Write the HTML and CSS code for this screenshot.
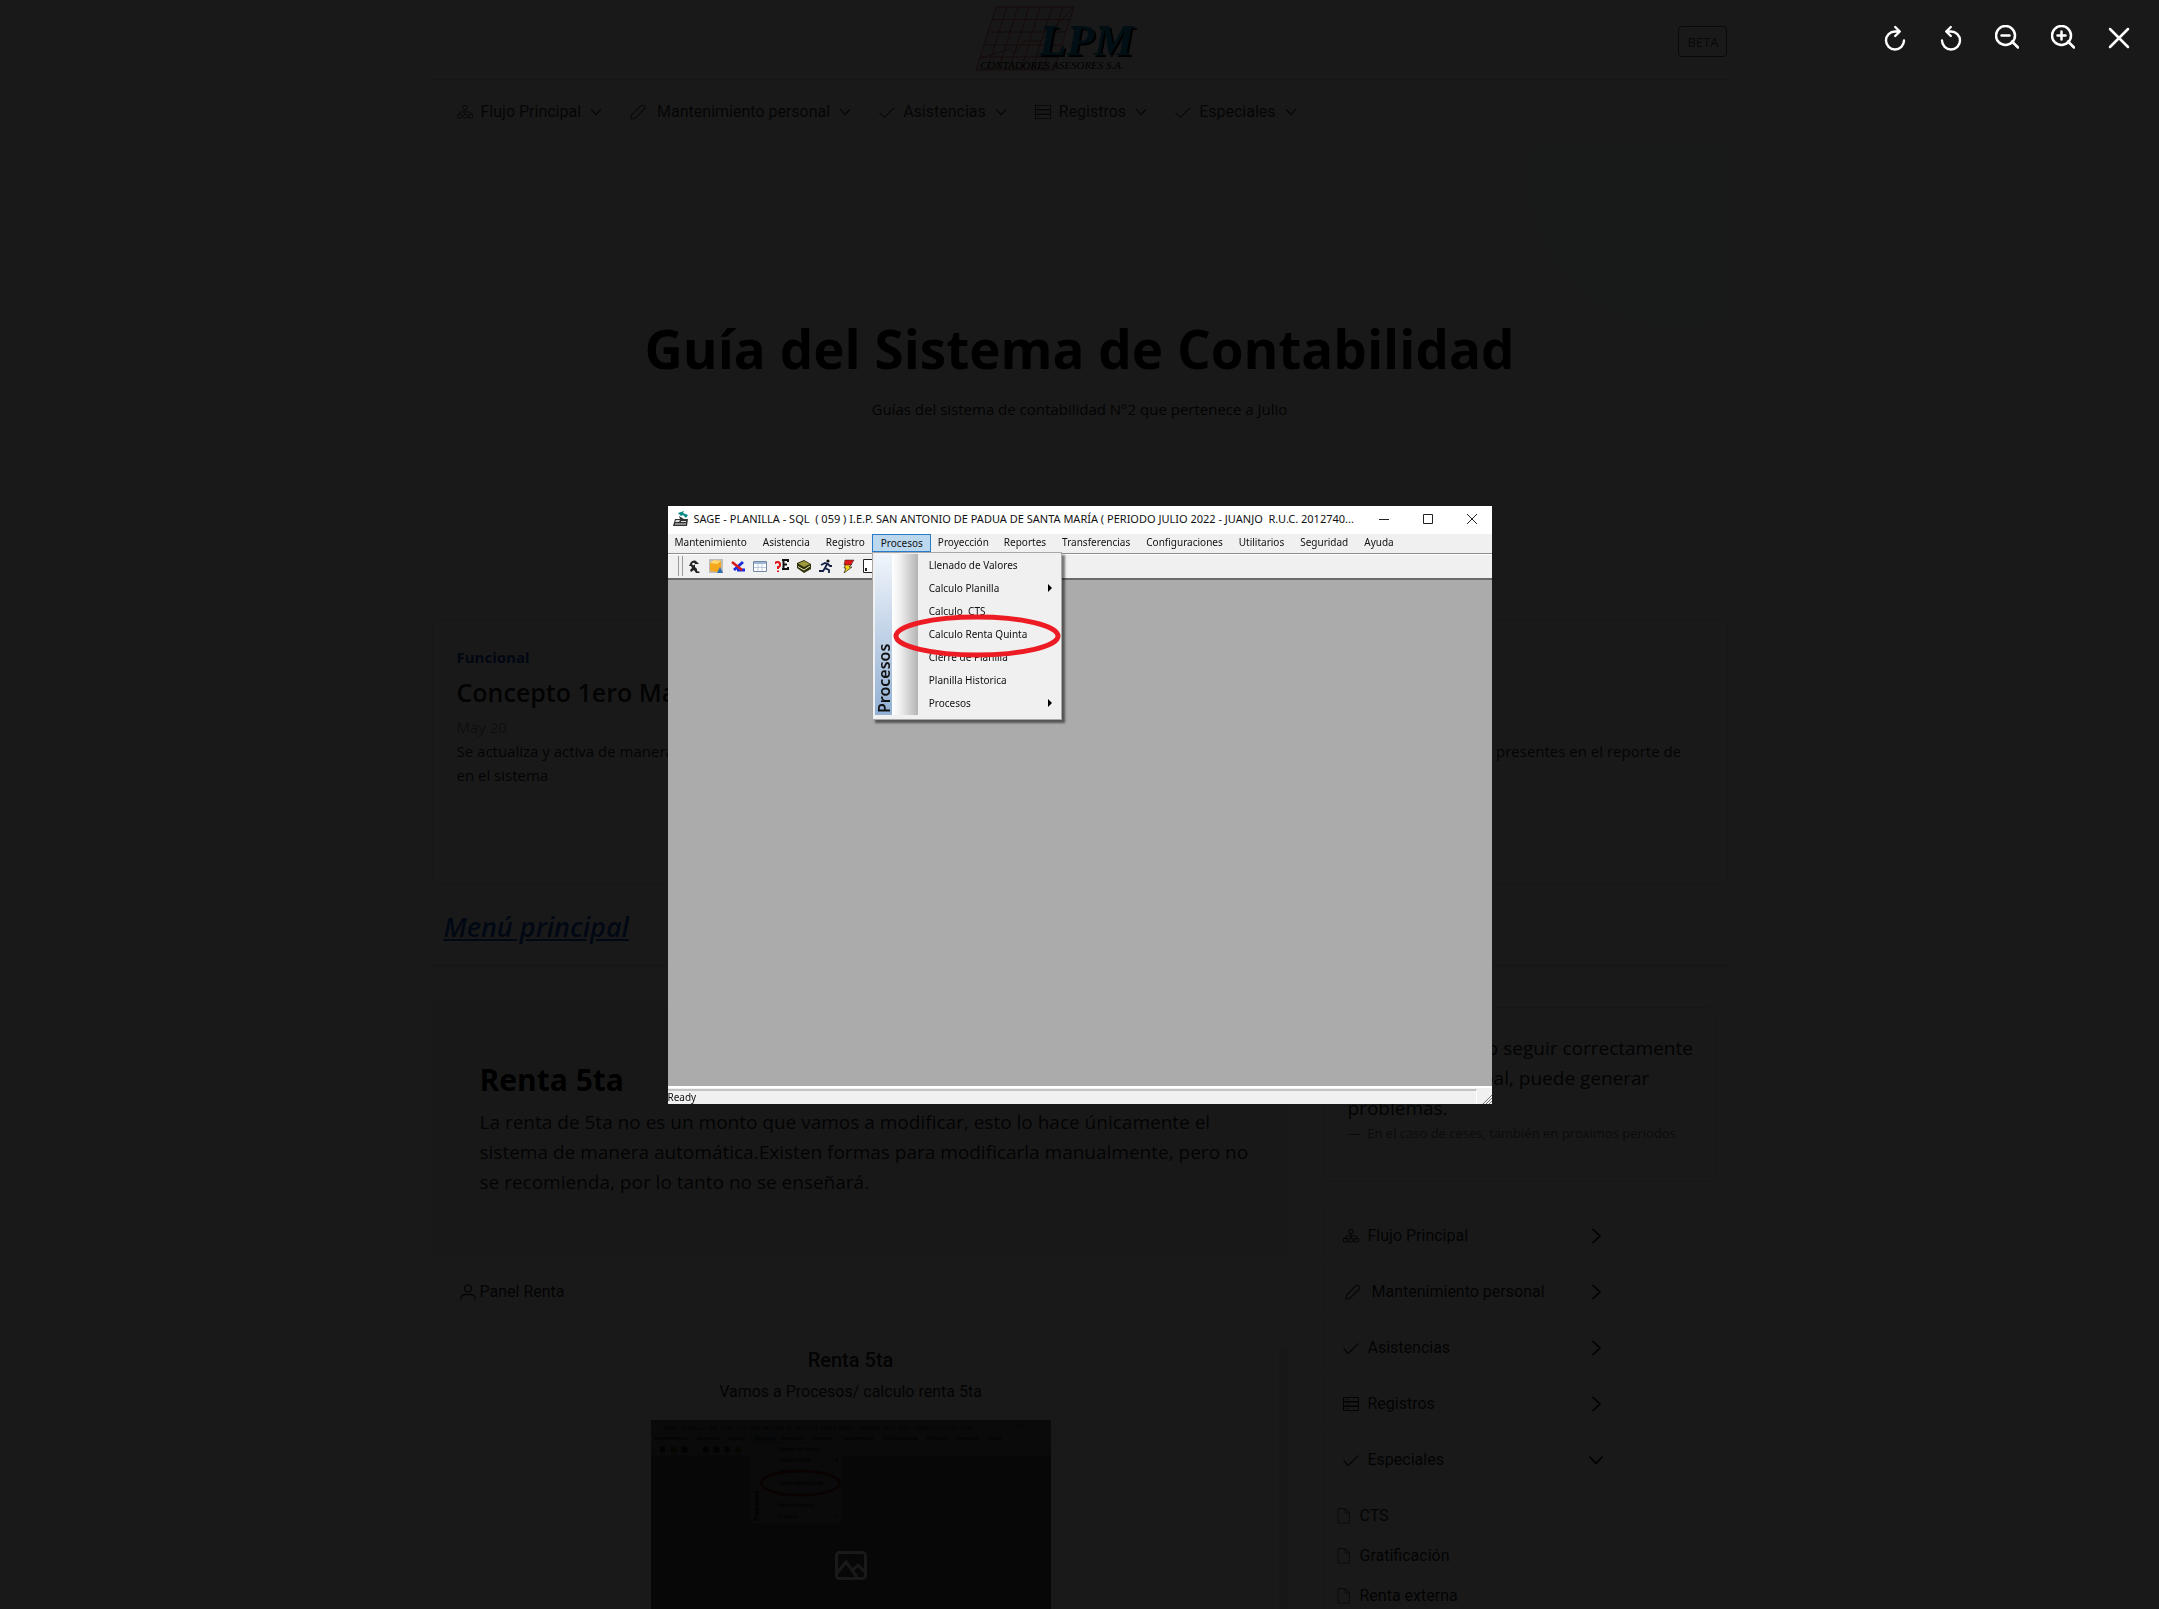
FILE: index.html
```html
<!DOCTYPE html>
<html lang="es">
<head>
<meta charset="utf-8">
<meta name="viewport" content="width=device-width, initial-scale=1">
<title>Guía del Sistema de Contabilidad</title>
<link rel="stylesheet" href="styles.css">
</head>
<body>
<svg class="sprite" aria-hidden="true">
  <symbol id="sitemap" viewBox="0 0 16 16"><g fill="none" stroke="currentColor"><rect x="6" y="1.500" width="4" height="4" rx=".5"/><rect x=".5" y="10.500" width="4" height="3.500" rx=".5"/><rect x="6" y="10.500" width="4" height="3.500" rx=".5"/><rect x="11.500" y="10.500" width="4" height="3.500" rx=".5"/><path d="M8 5.500v5M2.500 10.500V9a1 1 0 0 1 1-1h9a1 1 0 0 1 1 1v1.500"/></g></symbol>
  <symbol id="pencil" viewBox="0 0 16 16"><path d="M1 15l.6-4L11 1.600a1.900 1.900 0 0 1 2.700 0l.7.700a1.900 1.900 0 0 1 0 2.700L5 14.400z" fill="none" stroke="currentColor" stroke-width="1.100" stroke-linejoin="round"/></symbol>
  <symbol id="check" viewBox="0 0 16 16"><path d="M.5 8.500l4.800 5L15.500 3.500" fill="none" stroke="currentColor" stroke-width="1.100"/></symbol>
  <symbol id="server" viewBox="0 0 16 16"><g fill="none" stroke="currentColor"><rect x=".5" y="1.500" width="15" height="4"/><rect x=".5" y="6" width="15" height="4"/><rect x=".5" y="10.500" width="15" height="4"/><path d="M2.500 3.500h1m1 0h1M2.500 8h1m1 0h1M2.500 12.500h1m1 0h1"/></g></symbol>
  <symbol id="down" viewBox="0 0 16 16"><path d="M1.500 4.500L8 11.500l6.500-7" fill="none" stroke="currentColor" stroke-width="1.800"/></symbol>
  <symbol id="right" viewBox="0 0 16 16"><path d="M4.500 1L12 8l-7.500 7" fill="none" stroke="currentColor" stroke-width="1.600"/></symbol>
  <symbol id="file" viewBox="0 0 16 16"><path d="M3.500.6h5.600l4.300 4.300v8.900a1.500 1.500 0 0 1-1.500 1.500H3.500A1.500 1.500 0 0 1 2 13.800V2.100A1.500 1.500 0 0 1 3.500.6zM9 .8V5h4.300" fill="none" stroke="currentColor" stroke-width="1.100"/></symbol>
  <symbol id="user" viewBox="0 0 16 16"><g fill="none" stroke="currentColor" stroke-width="1.300"><circle cx="8" cy="4.500" r="3.400"/><path d="M1 15.500v-1a4 4 0 0 1 4-4h6a4 4 0 0 1 4 4v1"/></g></symbol>
  <symbol id="rotate" viewBox="0 0 24 26"><path d="M21 15.500A9 9 0 1 1 12 6.500h4M12.200 2l4.600 4.500-4.600 4.500" fill="none" stroke="currentColor" stroke-width="2.400" stroke-linecap="round" stroke-linejoin="round"/></symbol>
</svg>

<div class="page">
  <header class="masthead">
    <span></span>
    <svg class="logo" viewBox="0 0 160 68" role="img" aria-label="LPM Contadores Asesores S.A.">
      <g fill="none" stroke="#e06464" stroke-width="1">
        <path fill="#e4e4e4" d="M21 2h78L79 65H1z"/>
        <path d="M32 2L12 65M43 2L23 65M54 2L34 65M65 2L46 65M77 2L57 65M88 2L68 65M17 14.500h78M13 27h78M9 40h78M5 52h78"/>
        <path d="M4 54l30-10 6 4 9-12h16L99 2"/>
      </g>
      <text class="logo-mark" x="64" y="50">LPM</text>
      <text class="logo-name" x="5" y="64">CONTADORES ASESORES S.A.</text>
    </svg>
    <button class="beta" type="button">BETA</button>
  </header>

  <nav class="nav" aria-label="Principal">
    <a href="#flujo"><svg class="ic"><use href="#sitemap"/></svg>Flujo Principal<svg class="chev"><use href="#down"/></svg></a>
    <a href="#mantenimiento"><svg class="ic ic-pencil"><use href="#pencil"/></svg>Mantenimiento personal<svg class="chev"><use href="#down"/></svg></a>
    <a href="#asistencias"><svg class="ic"><use href="#check"/></svg>Asistencias<svg class="chev"><use href="#down"/></svg></a>
    <a href="#registros"><svg class="ic"><use href="#server"/></svg>Registros<svg class="chev"><use href="#down"/></svg></a>
    <a href="#especiales"><svg class="ic"><use href="#check"/></svg>Especiales<svg class="chev"><use href="#down"/></svg></a>
  </nav>

  <section class="hero">
    <h1>Guía del Sistema de Contabilidad</h1>
    <p>Guías del sistema de contabilidad N°2 que pertenece a Julio</p>
  </section>

  <article class="card">
    <strong>Funcional</strong>
    <h3>Concepto 1ero Mayo</h3>
    <div class="date">May 20</div>
    <p>Se actualiza y activa de manera automática el concepto para el primero de mayo, se debe revisar que todos los trabajadores y feriados nuevos estén presentes en el reporte de<br>en el sistema</p>
  </article>

  <h2 class="section-title"><a href="#menu">Menú principal</a></h2>

  <div class="columns">
    <main class="content">
      <section class="jumbo">
        <h2>Renta 5ta</h2>
        <p>La renta de 5ta no es un monto que vamos a modificar, esto lo hace únicamente el<br>sistema de manera automática.Existen formas para modificarla manualmente, pero no<br>se recomienda, por lo tanto no se enseñará.</p>
      </section>
      <div class="divider"><span><svg class="ic"><use href="#user"/></svg>Panel Renta</span></div>
      <section class="panel">
        <div class="panel-body">
          <h4>Renta 5ta</h4>
          <p>Vamos a Procesos/ calculo renta 5ta</p>
          <button class="thumb" type="button" aria-label="Ampliar imagen">
            <svg class="thumb-img" viewBox="0 0 824 598">
              <path fill="#ababab" d="M0 0h824v598H0z"/><path fill="#fff" d="M0 0h824v28H0z"/><path fill="#f0f0f0" d="M0 28h824v45H0z"/><path fill="#fff" d="M0 46h824v2H0z"/>
              <path fill="#bcd8ef" d="M204 28h58v19h-58z"/><path fill="#f0f0f0" stroke="#aaa" d="M204 47h190v166H204z"/>
              <g class="thumb-title"><text x="26" y="20">SAGE - PLANILLA - SQL ( 059 ) I.E.P. SAN ANTONIO DE PADUA DE SANTA MARÍA ( PERIODO JULIO 2022 - JUANJO R.U.C. 2012740...</text></g>
              <g class="thumb-text">
                <text x="7" y="41">Mantenimiento</text><text x="94" y="41">Asistencia</text><text x="157" y="41">Registro</text><text x="213" y="41">Procesos</text><text x="268" y="41">Proyección</text><text x="333" y="41">Reportes</text><text x="392" y="41">Transferencias</text><text x="477" y="41">Configuraciones</text><text x="568" y="41">Utilitarios</text><text x="630" y="41">Seguridad</text><text x="694" y="41">Ayuda</text>
                <text x="261" y="64">Llenado de Valores</text><text x="261" y="87">Calculo Planilla</text><text x="261" y="110">Calculo CTS</text><text x="261" y="133">Calculo Renta Quinta</text><text x="261" y="156">Cierre de Planilla</text><text x="261" y="179">Planilla Historica</text><text x="261" y="202">Procesos</text>
                <text class="thumb-side" transform="translate(222 208) rotate(-90)">Procesos</text>
              </g>
              <path d="M382 80l4 3-4 3zM382 195l4 3-4 3z"/>
              <path fill="#444" d="M19 55h10v12H19zM63 55h12v12H63zM107 55h12v12h-12zM129 55h12v12h-12zM152 55h10v12h-10z"/><path fill="#a80" d="M41 55h12v12H41zM175 55h10v12h-10z"/>
              <path fill="none" stroke="#333" d="M711 15h9M755 9h9v9h-9zM799 9l9 9m0-9l-9 9"/>
              <ellipse cx="308" cy="130" rx="81" ry="25" fill="none" stroke="#ed1c24" stroke-width="5"/>
            </svg>
            <span class="thumb-mask"><svg viewBox="0 0 32 32"><g fill="none" stroke="currentColor" stroke-width="3"><rect x="1.500" y="3.500" width="29" height="26" rx="3"/><path d="M2 24l9-11 11 15M17 22l6-6 8 8"/></g></svg></span>
          </button>
        </div>
        <div class="scrollbar"></div>
      </section>
    </main>

    <aside class="sidebar">
      <blockquote class="quote">
        <p>En un caso de no seguir correctamente<br>un menú principal, puede generar<br>problemas.</p>
        <footer>—&nbsp; En el caso de ceses, también en proximos periodos</footer>
      </blockquote>
      <ul class="tree">
        <li><a href="#flujo"><svg class="ic"><use href="#sitemap"/></svg>Flujo Principal<svg class="arrow"><use href="#right"/></svg></a></li>
        <li><a href="#mantenimiento"><svg class="ic ic-pencil"><use href="#pencil"/></svg>Mantenimiento personal<svg class="arrow"><use href="#right"/></svg></a></li>
        <li><a href="#asistencias"><svg class="ic"><use href="#check"/></svg>Asistencias<svg class="arrow"><use href="#right"/></svg></a></li>
        <li><a href="#registros"><svg class="ic"><use href="#server"/></svg>Registros<svg class="arrow"><use href="#right"/></svg></a></li>
        <li><a href="#especiales"><svg class="ic"><use href="#check"/></svg>Especiales<svg class="arrow"><use href="#down"/></svg></a>
          <ul class="subtree">
            <li><a href="#cts"><svg class="ic"><use href="#file"/></svg>CTS</a></li>
            <li><a href="#gratificacion"><svg class="ic"><use href="#file"/></svg>Gratificación</a></li>
            <li><a href="#renta-externa"><svg class="ic"><use href="#file"/></svg>Renta externa</a></li>
          </ul>
        </li>
      </ul>
    </aside>
  </div>
</div>

<div class="overlay" role="dialog" aria-modal="true" aria-label="Vista previa">
  <div class="overlay-tools">
    <button type="button" aria-label="Girar a la derecha"><svg viewBox="0 0 24 26"><use href="#rotate"/></svg></button>
    <button type="button" aria-label="Girar a la izquierda"><svg class="flip" viewBox="0 0 24 26"><use href="#rotate"/></svg></button>
    <button type="button" aria-label="Alejar"><svg viewBox="0 0 24 26"><path d="M17 16.500l6 6M6.500 10.500h8M20 10.500a9.500 9.500 0 1 1-19 0 9.500 9.500 0 0 1 19 0z"/></svg></button>
    <button type="button" aria-label="Acercar"><svg viewBox="0 0 24 26"><path d="M17 16.500l6 6M6.500 10.500h8M10.500 6.500v8M20 10.500a9.500 9.500 0 1 1-19 0 9.500 9.500 0 0 1 19 0z"/></svg></button>
    <button type="button" aria-label="Cerrar"><svg viewBox="0 0 24 26"><path d="M3 4l18 18M21 4L3 22"/></svg></button>
  </div>

  <div class="win">
    <div class="win-title">
      <svg class="win-logo" viewBox="0 0 16 16"><path fill="#333" d="M0 15l2-7h5l-1-3 5 3h4l-1 7z"/><path fill="#ddd" d="M3 9h4l-1 2H2zM8 10h5v1H8zM2 12.500h11v1H2z"/><path fill="#0a8a86" d="M5 2l6-2-1 2 5 2-2 3-3-3-2 1z"/></svg>
      <span class="win-name">SAGE - PLANILLA - SQL&nbsp; ( 059 ) I.E.P. SAN ANTONIO DE PADUA DE SANTA MARÍA ( PERIODO JULIO 2022 - JUANJO&nbsp; R.U.C. 2012740...</span>
      <span class="win-buttons">
        <svg viewBox="0 0 12 12"><path d="M1 6.500h10"/></svg>
        <svg viewBox="0 0 12 12"><path d="M1.500 1.500h9v9h-9z"/></svg>
        <svg viewBox="0 0 12 12"><path d="M1 1l10 10M11 1L1 11"/></svg>
      </span>
    </div>
    <div class="win-menu">
      <button type="button">Mantenimiento</button>
      <button type="button">Asistencia</button>
      <button type="button">Registro</button>
      <div class="open">
        <button type="button">Procesos</button>
        <div class="drop">
          <div class="drop-side"><span>Procesos</span></div>
          <div class="drop-gutter"></div>
          <ul>
            <li>Llenado de Valores</li>
            <li class="more">Calculo Planilla</li>
            <li>Calculo&nbsp; CTS</li>
            <li>Calculo Renta Quinta</li>
            <li>Cierre de Planilla</li>
            <li>Planilla Historica</li>
            <li class="more">Procesos</li>
          </ul>
          <svg class="mark" viewBox="0 0 168 44"><ellipse cx="84" cy="22" rx="81" ry="19"/></svg>
        </div>
      </div>
      <button type="button">Proyección</button>
      <button type="button">Reportes</button>
      <button type="button">Transferencias</button>
      <button type="button">Configuraciones</button>
      <button type="button">Utilitarios</button>
      <button type="button">Seguridad</button>
      <button type="button">Ayuda</button>
    </div>
    <div class="win-tools">
      <svg viewBox="0 0 14 14"><path d="M3 5a4 4 0 0 1 7-2l2 2H8v3l2 2v2l3 1-1 1H9L7 11l-3 2-1-2 2-2-1-2H2z" fill="#222"/><circle cx="6.500" cy="5" r="1.300" fill="#fff"/></svg>
      <svg viewBox="0 0 14 14"><path fill="#bdbdbd" d="M0 0h14v14H0z"/><path fill="#f5a81c" d="M1 4l4-3 7 1v8l-4 3-7-1z"/><path fill="#ffd774" d="M1 4l4-3 7 1-4 3z"/><path fill="#2f6db5" d="M11 8l3 6H8z"/></svg>
      <svg viewBox="0 0 14 14"><path fill="none" stroke="#1a2ee0" stroke-width="3" d="M12 3L3 11M6 11h8"/><path stroke="#d81818" stroke-width="2.500" d="M1 3l10 8"/></svg>
      <svg viewBox="0 0 14 14"><path fill="#fff" stroke="#7389a8" d="M.5 2.500h13v10H.5z"/><path fill="#9fb6d6" d="M1 3h12v2H1z"/><path fill="none" stroke="#bccbe0" d="M5 5v7M9 5v7M1 8.500h12"/></svg>
      <svg viewBox="0 0 14 14"><path fill="none" stroke="#e01414" stroke-width="2" d="M0 5q0-2 2.500-2T5 5.500 3 8v2M3 11.500V13"/><path fill="none" stroke="#111" stroke-width="2" d="M13 3V1H7m1.500 0v9M7 10h6V8M8 5.500h4"/></svg>
      <svg viewBox="0 0 14 14"><path fill="#2e2f0b" d="M0 4l7-3 7 4v5l-7 4-7-5z"/><path fill="#9c9a3c" d="M1 4.500l6-2.500 6 3-6 3z"/><path stroke="#e6e6b0" d="M1 7.500l6 3.500 6-4" fill="none"/></svg>
      <svg viewBox="0 0 14 14"><circle cx="9" cy="2" r="1.600" fill="#111"/><path fill="none" stroke="#152046" stroke-width="1.800" d="M2 6l4-2 3 1 2 2h2M8 5L6 9l4 2v3M6 9l-2 3H0"/></svg>
      <svg viewBox="0 0 14 14"><path fill="#f5d313" stroke="#222" stroke-width=".7" d="M5 5h6L8 8h3l-8 6 2-5H3z"/><path fill="#e01818" stroke="#222" stroke-width=".5" d="M4 1h9l-3 5H3z"/></svg>
      <svg viewBox="0 0 14 14"><path fill="#fff" stroke="#222" d="M.5.5h9l3 3v10H.5z"/><path fill="#222" d="M2 9h2v3H2z"/></svg>
    </div>
    <div class="win-body"></div>
    <div class="win-status"><span>Ready</span><svg viewBox="0 0 10 10"><path d="M1 10l9-9M4 10l6-6M7 10l3-3"/></svg></div>
  </div>
</div>
</body>
</html>
```
FILE: styles.css
```css
* { box-sizing: border-box; }
body {
  margin: 0;
  height: 100vh;
  overflow: hidden;
  background: #fff;
  color: #212529;
  font: 15px/24px "Open Sans", "Noto Sans", sans-serif;
}
h1, h2, h3, h4, p, ul, blockquote { margin: 0; padding: 0; }
ul { list-style: none; }
a { color: inherit; text-decoration: none; }
button { font: inherit; color: inherit; }
.sprite { display: none; }
.page { max-width: 1320px; margin: 0 auto; padding: 0 12px; }
.ic { width: 16px; height: 16px; flex: none; }

.masthead {
  display: flex;
  align-items: center;
  justify-content: space-between;
  height: 80px;
  padding-bottom: 2px;
  border-bottom: 1px solid #dcdcdc;
}
.logo { width: 160px; height: 68px; overflow: visible; }
.logo-mark { font: italic bold 45px "Liberation Serif", serif; fill: #0a9ad8; filter: drop-shadow(2px 2px 0 #000); }
.logo-name { font: italic 11px "Liberation Serif", serif; fill: #000; }
.beta {
  height: 31px;
  margin-top: 6px;
  padding: 0 8px;
  border: 1px solid #495057;
  border-radius: 4px;
  background: none;
  color: #495057;
  font-size: 13px;
}

.nav {
  display: flex;
  align-items: center;
  gap: 28px;
  height: 65px;
  padding: 0 24px;
  border: 1px solid #ededed;
  border-top: 0;
  border-radius: 4px;
  color: #343a40;
  font-family: Roboto, sans-serif;
  font-size: 16px;
}
.nav a { display: flex; align-items: center; gap: 8px; }
.nav .ic { color: #50575d; }
.nav .ic-pencil { margin-right: 3px; }
.chev { width: 12px; height: 12px; margin-left: 1px; }

.hero {
  padding: 172px 24px 174px;
  text-align: center;
  border-radius: 4px;
  background: radial-gradient(circle at 96% 8%, #f2fcf8, #fafafa 20%, #fcfcfc 60%, #fff);
}
.hero h1 { font-size: 53px; line-height: 64px; font-weight: 700; margin-bottom: 16px; color: #000; }

.card {
  min-height: 264px;
  margin-top: 25px;
  padding: 24px;
  border: 1px solid #dadada;
  border-radius: 8px;
}
.card strong { display: block; color: #0d46b8; margin-bottom: 6px; }
.card h3 { font-size: 25px; line-height: 34px; font-weight: 600; margin-bottom: 6px; }
.date { color: #8c9299; }

.section-title {
  margin-top: 26px;
  padding: 0 12px 21px;
  border-bottom: 1px solid #d0d0d0;
  color: #0d56c8;
  font-size: 27px;
  line-height: 34px;
  font-weight: 600;
  font-style: italic;
}
.section-title a { text-decoration: underline; }

.columns { display: grid; grid-template-columns: repeat(12, 1fr); gap: 24px; margin-top: 36px; }
.content { grid-column: span 8; }
.sidebar { grid-column: span 4; padding: 5px 12px 0; }
.jumbo { padding: 59px 24px 61px 48px; background: #f6f6f6; border-radius: 4px; }
.jumbo h2 { font-size: 30px; line-height: 38px; font-weight: 700; margin-bottom: 8px; color: #000; }
.jumbo p { font-size: 19px; line-height: 30px; }

.divider { display: flex; align-items: center; margin-top: 22px; font-family: Roboto, sans-serif; font-size: 16px; }
.divider::before, .divider::after { content: ""; border-top: 1px dashed #dcdcdc; width: 20px; }
.divider::after { flex: 1; }
.divider span { display: flex; align-items: center; gap: 4px; padding: 0 8px; }

.panel { display: grid; grid-template-columns: 1fr 9px; gap: 9px; margin-top: 44px; font-family: Roboto, sans-serif; }
.panel-body { display: flex; flex-direction: column; align-items: center; }
.panel h4 { font-size: 20px; font-weight: 500; margin-bottom: 8px; }
.panel p { font-size: 16px; margin-bottom: 16px; }
.scrollbar { border-radius: 4px; background: #ebebeb; }
.thumb { position: relative; width: 400px; max-width: 100%; padding: 0; border: 0; background: none; }
.thumb-img { display: block; width: 100%; }
.thumb-mask { position: absolute; inset: 0; display: flex; align-items: center; justify-content: center; background: rgba(0, 0, 0, .58); color: #fff; }
.thumb-mask svg { width: 32px; height: 32px; }
.thumb-title { font-size: 11px; }
.thumb-text { font-size: 10px; }
.thumb-side { font-size: 15px; font-weight: 700; }

.quote { padding: 25px 23px 37px; border: 1px solid #dadada; border-radius: 8px; background: #f8f8f8; font-size: 19px; line-height: 30px; white-space: nowrap; }
.quote footer { font-size: 13px; line-height: 21px; color: #6c757d; }

.tree { width: 303px; max-width: 100%; margin-top: 25px; border: 1px solid #ececec; font-family: Roboto, sans-serif; font-size: 16px; }
.tree a { display: flex; align-items: center; gap: 9px; height: 56px; padding: 0 22px 0 18px; }
.tree > li + li { border-top: 1px solid #f4f4f4; margin-top: -1px; }
.tree .ic-pencil { margin: 0 2px 0 2px; }
.arrow { width: 16px; height: 16px; margin-left: auto; color: #000; }
.subtree { padding-top: 8px; }
.tree .subtree a { height: 40px; padding-left: 11px; gap: 8px; }
.subtree .ic { color: #6c757d; }

.overlay {
  position: fixed;
  inset: 0;
  display: flex;
  align-items: center;
  justify-content: center;
  background: rgba(0, 0, 0, .9);
}
.overlay-tools { position: absolute; top: 14px; right: 16px; display: flex; gap: 8px; color: #fff; }
.overlay-tools button { display: flex; align-items: center; justify-content: center; width: 48px; height: 48px; padding: 0; border: 0; background: none; }
.overlay-tools svg { width: 24px; height: 26px; fill: none; stroke: currentColor; stroke-width: 2.500; stroke-linecap: round; }
.flip { transform: scaleX(-1); }

.win {
  display: flex;
  flex-direction: column;
  width: 824px;
  max-width: 96%;
  aspect-ratio: 824 / 598;
  background: #f0f0f0;
  color: #111;
  font: 10px/16px "Noto Sans", "Open Sans", sans-serif;
}
.win-title { display: flex; align-items: center; gap: 5px; height: 28px; padding: 0 14px 2px 5px; background: #fff; font-size: 11px; }
.win-logo { flex: none; width: 16px; height: 16px; }
.win-name { flex: 1; white-space: nowrap; }
.win-buttons { display: flex; gap: 32px; }
.win-buttons svg { width: 12px; height: 12px; fill: none; stroke: #222; stroke-width: 1; }
.win-menu { display: flex; height: 20px; border-bottom: 1px solid #8f8f8f; }
.win-menu button { height: 18px; padding: 0 9px 2px 7px; border: 0; background: none; }
.win-menu .open ~ button { padding: 0 8px 2px; }
.win-menu .open + button { padding: 0 7px 2px; }
.open { position: relative; margin-left: -2px; }
.win-menu .open button { padding: 0 7px 2px 8px; border: 1px solid #2a7bc8; background: #bcd8ef; }
.drop {
  position: absolute;
  top: 18px;
  left: 0;
  display: grid;
  grid-template-columns: 17px 26px 1fr;
  width: 190px;
  padding: 1px 2px 4px;
  border: 1px solid #a8a8a8;
  background: #f0f0f0;
  box-shadow: 3px 3px 2px rgba(0, 0, 0, .5);
}
.drop-side {
  display: flex;
  align-items: center;
  justify-content: flex-start;
  padding-top: 2px;
  background: linear-gradient(#92b0d4, #f0f5fb);
  writing-mode: vertical-rl;
  transform: rotate(180deg);
  font-size: 16px;
  font-weight: 600;
}
.drop-gutter { background: linear-gradient(90deg, #fff, #f0f0f0 30%, #b4b4b4); }
.drop li { height: 23px; padding-left: 11px; line-height: 23px; white-space: nowrap; }
.drop .more { display: flex; align-items: center; justify-content: space-between; padding-right: 7px; }
.more::after { content: ""; border: 4px solid transparent; border-left: 4px solid #000; border-right: 0; }
.mark { position: absolute; top: 61px; left: 20px; width: 168px; height: 44px; fill: none; stroke: #ed1c24; stroke-width: 5; }
.win-tools { display: flex; align-items: center; gap: 8px; height: 26px; padding-left: 6px; border-top: 1px solid #fff; border-bottom: 2px solid #6a6a6a; }
.win-tools::before { content: ""; width: 3px; height: 20px; margin-left: 4px; margin-right: -4px; border: solid #999; border-width: 0 1px; }
.win-tools svg { width: 14px; height: 14px; }
.win-body { flex: 1; background: #ababab; }
.win-status { display: flex; align-items: flex-end; justify-content: space-between; height: 18px; line-height: 13px; border-top: 2px solid #fff; }
.win-status span { flex: 1; height: 15px; margin-right: 5px; border-top: 2px solid #c3c3c3; border-right: 1px solid #fff; }
.win-status svg { width: 10px; height: 10px; stroke: #777; fill: none; }
```
